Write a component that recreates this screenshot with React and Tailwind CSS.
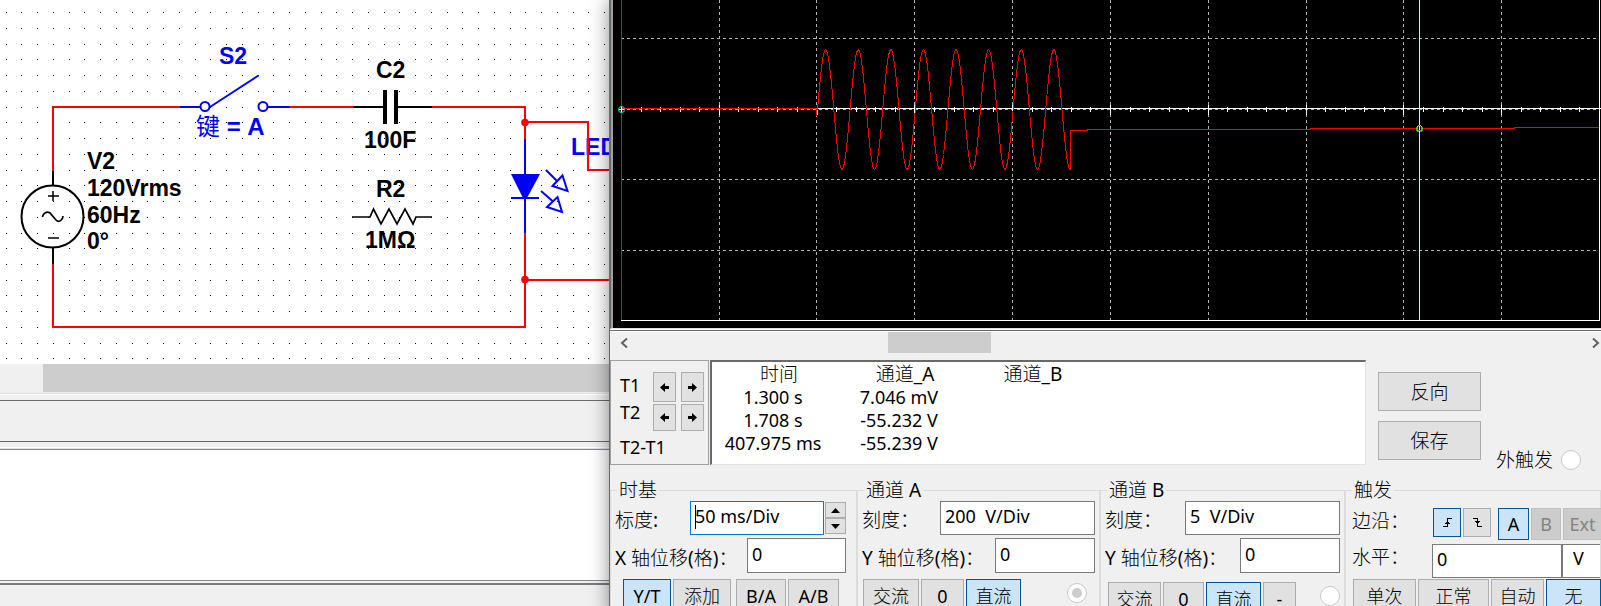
import { useState } from "react";
import clsx from "clsx";

const GRID_X = [106, 203, 301, 399, 497, 595, 693, 790, 888];
const GRID_Y = [38, 179, 250];

const readings = [
  { time: "1.300 s", a: "7.046 mV", b: "" },
  { time: "1.708 s", a: "-55.232 V", b: "" },
  { time: "407.975 ms", a: "-55.239 V", b: "" },
];

// sine burst while the switch is closed, then the held capacitor voltage
function tracePath() {
  let d = "M204 108";
  for (let x = 204; x <= 457; x++) {
    const y = 109.5 - 60 * Math.sin(((x - 204) / 32.6) * 2 * Math.PI);
    d += ` L${x + 0.5} ${y.toFixed(1)}`;
  }
  return d + " V130.5 H474 V129.5 H697 V128.5 H901 V127.5 H986";
}

function Dots() {
  const dots = [];
  for (let j = -1; j < 22; j++) {
    for (let i = 0; i < 60; i++) {
      dots.push(
        `M${Math.floor(6.2 + 15.75 * i)} ${Math.floor(28.4 + 15.74 * j)}h1v1h-1z`
      );
    }
  }
  return <path d={dots.join("")} fill="#000" shapeRendering="crispEdges" />;
}

function Schematic() {
  return (
    <svg className="block h-[364px] w-full bg-white font-['Liberation_Sans',Arial,sans-serif] text-[23px] font-bold">
      <Dots />
      <g fill="#0000ff">
        <text x="219" y="64">S2</text>
        <text x="196" y="135" className="text-[24px]">
          <tspan className="font-['Noto_Sans_CJK_SC',sans-serif] font-normal">键</tspan> = A
        </text>
        <text x="571" y="155">LED2</text>
      </g>
      <g fill="#000">
        <text x="87" y="169">V2</text>
        <text x="87" y="196">120Vrms</text>
        <text x="87" y="223">60Hz</text>
        <text x="87" y="249">0°</text>
        <text x="376" y="78">C2</text>
        <text x="364" y="148">100F</text>
        <text x="376" y="197">R2</text>
        <text x="365" y="248">1MΩ</text>
      </g>

      <g fill="none" stroke="#ff0000" strokeWidth="2" shapeRendering="crispEdges">
        <path d="M53 171V107H180M290 107H353M432 107H525V139M525 233V327H53V264" />
        <path d="M525 122H588V170H640M525 280H640" />
      </g>
      <circle cx="525" cy="122.500" r="3.800" fill="#ff0000" />
      <circle cx="525" cy="279.500" r="3.800" fill="#ff0000" />

      <g fill="none" stroke="#000" strokeWidth="2">
        <circle cx="52.500" cy="216.500" r="31" />
        <path d="M53 171V186M53 247V264" shapeRendering="crispEdges" />
        <path d="M48 196H59M53 191V201M48 238H59" strokeWidth="1.500" />
        <path d="M42.500 217C43 213 47 211 50 213L56 220C59 223 63 220 63 216" strokeWidth="1.700" />
        <path d="M353 107H384M398 107H432" shapeRendering="crispEdges" />
        <path d="M385 90V124M396 90V124" strokeWidth="4" shapeRendering="crispEdges" />
        <path d="M352 217H370L373.500 209L381 224L389 209L397 224L405 209L413 224L416 217H432" strokeWidth="1.700" />
      </g>

      <g fill="none" stroke="#0000ff" strokeWidth="2">
        <path d="M180 107H200M268 107H290M525 139V233M511 198H539" shapeRendering="crispEdges" />
        <circle cx="205" cy="106.500" r="4.500" />
        <circle cx="263" cy="106.500" r="4.500" />
        <path d="M210 107L258.500 75.500" />
        <path d="M511 174H540L527 198H523Z" fill="#0000ff" stroke="none" />
        <path d="M546 170L557 181M552.500 186L562.500 175.500L567.500 191Z" />
        <path d="M541 191L552.500 201M547 207L557.500 197L562 212Z" />
      </g>
    </svg>
  );
}

function ScopeScreen() {
  const ticks = [];
  for (let i = 1; i < 50; i++) {
    const x = Math.round(8 + i * 19.56);
    ticks.push(i % 5 === 0 ? `M${x + 0.5} 105v10` : `M${x + 0.5} 107v5`);
  }
  return (
    <svg className="block h-[328px] w-full bg-black">
      <g fill="none" strokeWidth="1" shapeRendering="crispEdges">
        <g stroke="#b4b4b4" strokeDasharray="3 3">
          {GRID_X.map((x) => (
            <path key={x} d={`M${x + 0.5} 0V320`} />
          ))}
          {GRID_Y.map((y) => (
            <path key={y} d={`M8 ${y + 0.5}H986`} />
          ))}
          <path d="M8 109.500H986" />
        </g>
        <path d="M203 108.500H988M8 320.500H986.500V0" stroke="#fff" />
        <path d={ticks.join("")} stroke="#fff" />
        <path d="M8.500 0V320M8 108.500H203.500V116" stroke="#ff0000" />
        <path d={tracePath()} stroke="#ff0000" />
        <path d="M806.500 0V320" stroke="#ffff33" />
      </g>
      <circle cx="8.500" cy="109.500" r="3" fill="none" stroke="#33e5e5" />
      <path d="M6 109.500h5M8.500 107v5" stroke="#fff" />
      <path d="M804 131V127L806.500 125L809 127V131Z" fill="#000" stroke="#ffff33" />
      <path d="M803 128.500h2M808 128.500h2" stroke="#00ff00" />
      <path d="M806.500 126V130" stroke="#ffff33" />
    </svg>
  );
}

function PushButton({ active, className, children, ...props }) {
  return (
    <button
      type="button"
      className={clsx(
        "flex shrink-0 items-center justify-center border leading-5 text-black disabled:border-[#bfbfbf] disabled:bg-[#cccccc] disabled:text-[#838383]",
        active ? "border-[#005499] bg-[#cce4f7]" : "border-[#adadad] bg-[#e1e1e1]",
        className
      )}
      {...props}
    >
      {children}
    </button>
  );
}

function ArrowButton({ dir, className, label }) {
  return (
    <PushButton className={className} aria-label={label}>
      <svg width="9" height="9" viewBox="0 0 9 9">
        <path
          d={dir === "left" ? "M0 4.500L5 0V3H9V6H5V9Z" : "M9 4.500L4 0V3H0V6H4V9Z"}
        />
      </svg>
    </PushButton>
  );
}

function Radio({ className, ...props }) {
  return (
    <input
      type="radio"
      className={clsx(
        "grid size-5 shrink-0 appearance-none place-content-center rounded-full border border-[#c8c8c8] bg-white before:size-2.5 before:rounded-full checked:before:bg-[#cccccc]",
        className
      )}
      {...props}
    />
  );
}

function Group({ title, children }) {
  return (
    <fieldset className="min-w-0 border border-[#dcdcdc] pl-1">
      <legend className="ml-0.5 px-0.5 text-[19px] leading-5">{title}</legend>
      {children}
    </fieldset>
  );
}

function Field({ id, label, value, labelClass, className, children }) {
  return (
    <div className={clsx("flex items-center", className)}>
      <label
        htmlFor={id}
        className={clsx("shrink-0 whitespace-nowrap pt-1 text-[19px] leading-5", labelClass)}
      >
        {label}
      </label>
      {children || (
        <input
          id={id}
          defaultValue={value}
          className="h-full w-0 min-w-0 flex-1 border border-[#7a7a7a] bg-white px-1 pb-1"
        />
      )}
    </div>
  );
}

function Channel({ name, value, scaleLabel, offsetLabel, children }) {
  return (
    <Group title={`通道 ${name}`}>
      <div className="pr-1">
        <Field
          id={`scale-${name}`}
          label="刻度："
          value={value}
          labelClass={scaleLabel}
          className="mt-px h-[34px]"
        />
        <Field
          id={`offset-${name}`}
          label="Y 轴位移(格)："
          value="0"
          labelClass={offsetLabel}
          className="mt-[3px] h-[35px]"
        />
      </div>
      {children}
    </Group>
  );
}

function Readout() {
  return (
    <div className="mt-[7px] flex items-start">
      <div className="h-[105px] w-[99px] shrink-0 border border-[#a0a0a0] pl-[9px] pt-[11px]">
        <div className="grid grid-cols-[28px_23px_23px] gap-x-[5px] gap-y-0.5">
          <span className="pt-1 leading-[18px]">T1</span>
          <ArrowButton dir="left" label="T1 left" className="h-[30px]" />
          <ArrowButton dir="right" label="T1 right" className="h-[30px]" />
          <span className="leading-[16px]">T2</span>
          <ArrowButton dir="left" label="T2 left" className="h-[27px]" />
          <ArrowButton dir="right" label="T2 right" className="h-[27px]" />
        </div>
        <div className="mt-[7px] leading-[18px]">T2-T1</div>
      </div>

      <div className="ml-px h-[105px] min-w-0 flex-1 border-2 border-b border-r border-b-[#e3e3e3] border-l-[#696969] border-r-[#e3e3e3] border-t-[#696969] bg-white">
        <table className="table-fixed border-collapse text-center">
          <colgroup>
            <col className="w-[122px]" />
            <col className="w-[130px]" />
            <col className="w-[126px]" />
          </colgroup>
          <thead>
            <tr className="h-6 text-[19px] leading-6">
              <th className="p-0 pl-3 font-normal">时间</th>
              <th className="p-0 pl-3 font-normal">通道_A</th>
              <th className="p-0 pl-3 font-normal">通道_B</th>
            </tr>
          </thead>
          <tbody>
            {readings.map((r) => (
              <tr key={r.time} className="h-[23px] leading-[23px]">
                <td className="p-0">{r.time}</td>
                <td className="p-0">{r.a}</td>
                <td className="p-0">{r.b}</td>
              </tr>
            ))}
          </tbody>
        </table>
      </div>

      <div className="flex shrink-0 items-end pl-3 pr-5 pt-3 text-[19px]">
        <div className="mb-2.5 flex flex-col gap-2.5">
          <PushButton className="h-[39px] w-[103px]">反向</PushButton>
          <PushButton className="h-[39px] w-[103px]">保存</PushButton>
        </div>
        <label className="ml-[15px] flex items-center gap-2 leading-5">
          外触发
          <Radio name="ext" />
        </label>
      </div>
    </div>
  );
}

function Oscilloscope() {
  const [mode, setMode] = useState("Y/T");

  return (
    <section className="z-10 min-w-0 border-l border-[#696969] bg-[#f0f0f0] font-['Noto_Sans','Noto_Sans_CJK_SC_Light','Noto_Sans_CJK_SC',sans-serif] text-[18px] text-black shadow-[0_0_18px_rgba(0,0,0,0.45)]">
      <div className="border-b border-l border-b-[#e3e3e3] border-l-[#696969] bg-[#a0a0a0] pl-0.5">
        <ScopeScreen />
      </div>
      <div className="h-0.5 border-b border-[#696969] bg-white" />

      <div className="flex h-[22px] items-stretch border-t border-white">
        <button type="button" aria-label="Scroll left" className="w-7 pl-2.5">
          <svg width="8" height="10" fill="none" stroke="#606060" strokeWidth="2">
            <path d="M7 0.500L2 5L7 9.500" />
          </svg>
        </button>
        <div className="min-w-0 flex-1">
          <div className="ml-[26.2%] h-full w-[10.8%] bg-[#cdcdcd]" />
        </div>
        <button type="button" aria-label="Scroll right" className="pr-px">
          <svg width="8" height="10" fill="none" stroke="#606060" strokeWidth="2">
            <path d="M1 0.500L6 5L1 9.500" />
          </svg>
        </button>
      </div>

      <Readout />

      <div className="mt-2.5 grid grid-cols-[247fr_243fr_245fr_256fr]">
        <Group title="时基">
          <Field id="timebase" label="标度:" labelClass="w-[75px]" className="mt-px h-[34px] pr-2.5">
            <div className="relative h-full min-w-0 flex-1">
              <input
                id="timebase"
                defaultValue="50 ms/Div"
                className="h-full w-full border border-[#0078d7] bg-white px-1 pb-1"
              />
              <span className="absolute left-[5px] top-1 h-6 w-px bg-black" />
            </div>
            <div className="ml-px flex w-[21px] shrink-0 flex-col">
              <PushButton className="h-4" aria-label="Increase">
                <svg width="9" height="5"><path d="M0 5L4.500 0L9 5Z" /></svg>
              </PushButton>
              <PushButton className="h-4" aria-label="Decrease">
                <svg width="9" height="5"><path d="M0 0L4.500 5L9 0Z" /></svg>
              </PushButton>
            </div>
          </Field>
          <Field
            id="x-offset"
            label="X 轴位移(格)："
            value="0"
            labelClass="w-[132px]"
            className="mt-[3px] h-[35px] pr-2.5"
          />
          <div className="mt-1.5 flex gap-0.5 pl-2">
            <PushButton className="h-[34px] w-12" active={mode === "Y/T"} onClick={() => setMode("Y/T")}>Y/T</PushButton>
            <PushButton className="h-[34px] w-[58px]" active={mode === "add"} onClick={() => setMode("add")}>添加</PushButton>
            <PushButton className="ml-[3px] h-[34px] w-[50px]" active={mode === "B/A"} onClick={() => setMode("B/A")}>B/A</PushButton>
            <PushButton className="h-[34px] w-[51px]" active={mode === "A/B"} onClick={() => setMode("A/B")}>A/B</PushButton>
          </div>
        </Group>

        <Channel name="A" value="200  V/Div" scaleLabel="w-[78px]" offsetLabel="w-[133px]">
          <div className="mt-1.5 flex gap-0.5 pl-px pr-3">
            <PushButton className="h-[34px] w-14">交流</PushButton>
            <PushButton className="h-[34px] w-[43px]">0</PushButton>
            <PushButton className="h-[34px] w-[55px]" active>直流</PushButton>
            <Radio name="channel-a" aria-label="通道 A" defaultChecked className="ml-auto mt-1" />
          </div>
        </Channel>

        <Channel name="B" value="5  V/Div" scaleLabel="w-20" offsetLabel="w-[135px]">
          <div className="mt-[9px] flex gap-0.5 pl-[3px] pr-1">
            <PushButton className="h-[34px] w-[53px]">交流</PushButton>
            <PushButton className="h-[34px] w-[41px]">0</PushButton>
            <PushButton className="h-[34px] w-[55px]" active>直流</PushButton>
            <PushButton className="h-[34px] w-[33px]">-</PushButton>
            <Radio name="channel-b" aria-label="通道 B" className="ml-auto mt-1" />
          </div>
        </Channel>

        <Group title="触发">
          <div className="flex h-11 items-start gap-0.5 pl-0.5 pt-2">
            <span className="w-[79px] shrink-0 text-[19px] leading-[26px]">边沿：</span>
            <PushButton className="h-[29px] w-7" active aria-label="Rising edge">
              <svg width="9" height="9" fill="none" stroke="#000" shapeRendering="crispEdges">
                <path d="M0 8.500H4.500V0.500H9M2 5.500H7M3 4.500H6" />
              </svg>
            </PushButton>
            <PushButton className="h-[29px] w-7" aria-label="Falling edge">
              <svg width="9" height="9" fill="none" stroke="#000" shapeRendering="crispEdges">
                <path d="M0 0.500H4.500V8.500H9M2 3.500H7M3 4.500H6" />
              </svg>
            </PushButton>
            <PushButton className="ml-[5px] h-8 w-[31px]" active>A</PushButton>
            <PushButton className="h-8 w-[30px]" disabled>B</PushButton>
            <PushButton className="h-8 w-[39px]" disabled>Ext</PushButton>
          </div>
          <div className="flex h-[34px] items-center pl-0.5">
            <label htmlFor="level" className="w-20 shrink-0 pb-2 text-[19px] leading-5">水平：</label>
            <input
              id="level"
              defaultValue="0"
              className="h-full w-0 min-w-0 flex-1 border border-[#7a7a7a] bg-white px-1 pb-1"
            />
            <input
              aria-label="Level unit"
              defaultValue="V"
              className="h-full w-[38px] border border-r-0 border-[#7a7a7a] bg-white pb-1.5 pl-2.5"
            />
          </div>
          <div className="mt-px flex gap-0.5 pl-[3px]">
            <PushButton className="h-[34px] w-[63px]">单次</PushButton>
            <PushButton className="h-[34px] w-[71px]">正常</PushButton>
            <PushButton className="h-[34px] w-[53px]">自动</PushButton>
            <PushButton className="h-[34px] w-[55px]" active>无</PushButton>
          </div>
        </Group>
      </div>
    </section>
  );
}

function Workspace() {
  return (
    <section className="flex min-w-0 flex-col overflow-hidden bg-[#f0f0f0]">
      <Schematic />
      <div className="flex h-7 shrink-0">
        <div className="ml-[7%] flex-1 bg-[#cdcdcd]" />
      </div>
      <div className="mt-px h-0.5 shrink-0 border-t border-[#e3e3e3] bg-white" />
      <div className="mt-[5px] h-[42px] shrink-0 border-y border-[#696969]" />
      <div className="mt-[5px] h-0.5 shrink-0 border-b border-[#e3e3e3] bg-white" />
      <div className="h-[132px] shrink-0 border-y border-[#828790] bg-white" />
      <div className="mt-0.5 flex-1 border-t-2 border-[#7a7a7a]" />
    </section>
  );
}

function App() {
  return (
    <main className="grid h-screen grid-cols-[609fr_992fr] overflow-hidden bg-[#f0f0f0]">
      <Workspace />
      <Oscilloscope />
    </main>
  );
}

export default App;
